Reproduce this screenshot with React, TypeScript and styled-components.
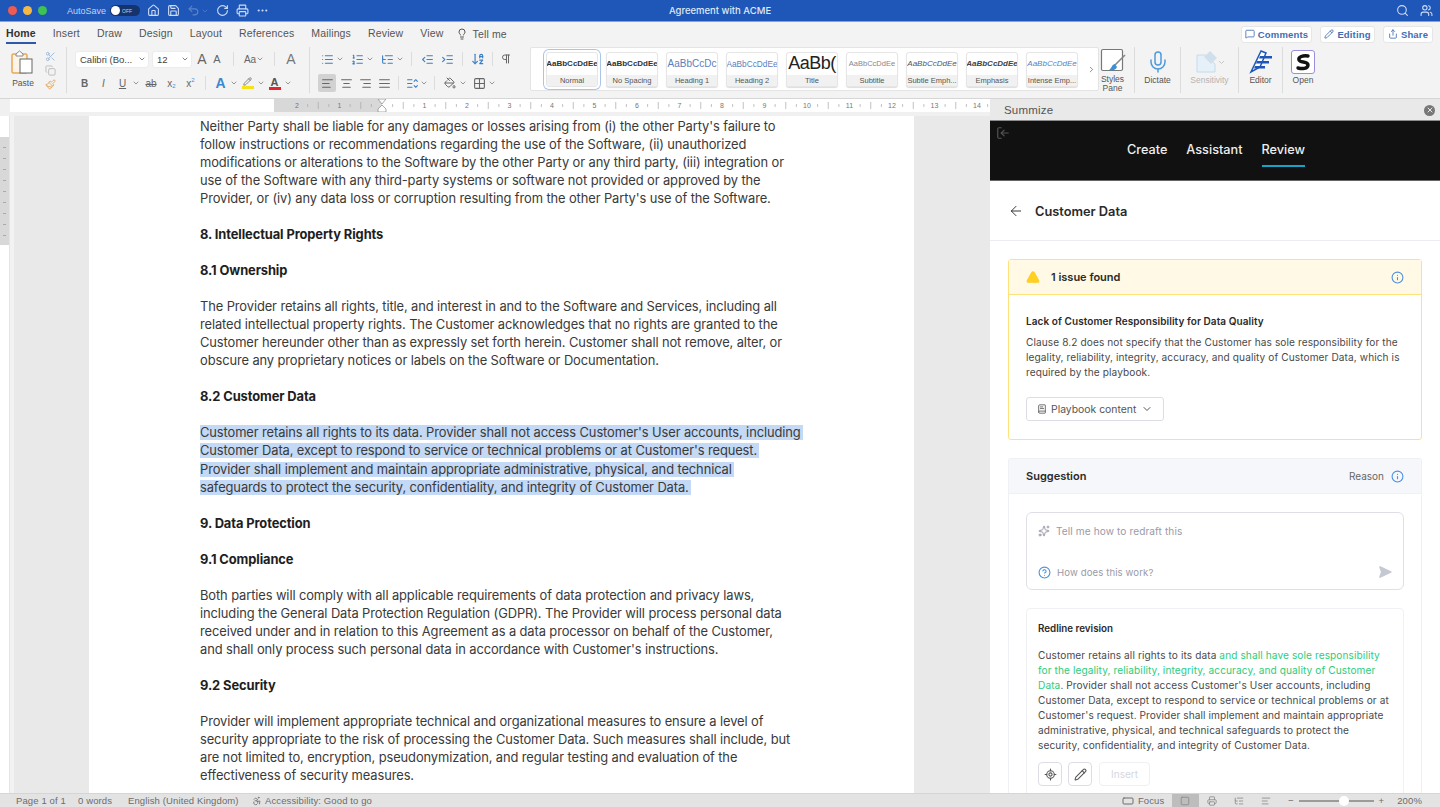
import React from "react";
import styled, { createGlobalStyle } from "styled-components";
import {
  Accessibility,
  AlignCenter,
  AlignJustify,
  AlignLeft,
  AlignRight,
  ArrowDownAZ,
  ArrowLeft,
  BookText,
  ChevronDown,
  ChevronRight,
  CircleHelp,
  Copy,
  Ellipsis,
  Grid2x2,
  House,
  IndentDecrease,
  IndentIncrease,
  Info,
  Lightbulb,
  List,
  ListChevronsUpDown,
  ListOrdered,
  ListTree,
  LocateFixed,
  LogIn,
  MessageSquare,
  Mic,
  PaintBucket,
  Paintbrush,
  Pencil,
  Pilcrow,
  Printer,
  RectangleHorizontal,
  RotateCw,
  Save,
  Scissors,
  Search,
  SendHorizontal,
  Share,
  Sparkles,
  Square,
  TriangleAlert,
  Undo2,
  Users,
  X,
} from "lucide-react";

const GlobalStyle = createGlobalStyle`
  html, body { margin: 0; height: 100%; overflow: hidden; }
  #root { height: 100%; }
  * { box-sizing: border-box; }
`;

const UI_FONT = `"Liberation Sans", Arial, sans-serif`;
const DOC_FONT = `Inter, "Noto Sans", sans-serif`;

const Shell = styled.div`
  height: 807px;
  display: flex;
  flex-direction: column;
  font-family: ${UI_FONT};
  background: #f3f3f3;
`;

/* title bar */
const TitleBar = styled.div`
  height: 21px;
  background: #1f57b8;
  display: flex;
  align-items: center;
  padding-left: 8px;
  color: #cfdcf3;
  position: relative;
  flex: none;
`;
const Dot = styled.span<{ $c: string }>`
  width: 9px;
  height: 9px;
  border-radius: 50%;
  background: ${(p) => p.$c};
  margin-right: 6px;
`;
const AutoSave = styled.span`
  font-size: 9px;
  margin-left: 14px;
  color: #c3d3ef;
`;
const Toggle = styled.span`
  width: 30px;
  height: 11px;
  margin: 0 7px 0 4px;
  border-radius: 6px;
  background: #15346c;
  display: flex;
  align-items: center;
  padding-left: 1px;
  font-size: 5px;
  color: #c3d3ef;
  gap: 2px;
  &::before {
    content: "";
    width: 9px;
    height: 9px;
    border-radius: 50%;
    background: #fff;
  }
`;
const TitleIcons = styled.div`
  display: flex;
  align-items: center;
  gap: 7px;
`;
const UndoCaret = styled(ChevronDown)`
  margin-left: -6px;
`;
const DocTitle = styled.div`
  position: absolute;
  left: 0;
  right: 0;
  text-align: center;
  font-family: ${DOC_FONT};
  font-size: 9.5px;
  font-weight: 500;
  color: #dfe8f7;
`;
const TitleRight = styled.div`
  margin-left: auto;
  display: flex;
  gap: 11px;
  padding-right: 7px;
`;

/* ribbon */
const Ribbon = styled.div`
  height: 78px;
  flex: none;
  background: #f3f3f3;
  border-top: 1px solid #7fa3de;
  border-bottom: 1px solid #d6d6d6;
  display: flex;
  flex-direction: column;
`;
const TabRow = styled.div`
  height: 24px;
  flex: none;
  display: flex;
  align-items: center;
  padding: 0 7px 0 6px;
  gap: 17px;
  font-size: 10.5px;
  letter-spacing: 0.15px;
  color: #555;
`;
const RibbonTab = styled.div<{ $active?: boolean }>`
  height: 20px;
  display: flex;
  align-items: center;
  font-weight: ${(p) => (p.$active ? 700 : 400)};
  color: ${(p) => (p.$active ? "#333" : "#555")};
  border-bottom: 2px solid ${(p) => (p.$active ? "#2d5aa8" : "transparent")};
`;
const TellMe = styled.div`
  display: flex;
  align-items: center;
  gap: 5px;
  margin-left: -5px;
`;
const ActionGroup = styled.div`
  margin-left: auto;
  display: flex;
  gap: 8px;
`;
const ActionButton = styled.div<{ $w: number }>`
  width: ${(p) => p.$w}px;
  height: 17px;
  background: #fff;
  border: 1px solid #e6e6e6;
  border-radius: 3px;
  color: #3f6db5;
  font-weight: 700;
  font-size: 9.5px;
  display: flex;
  align-items: center;
  justify-content: center;
  gap: 3px;
`;
const ToolArea = styled.div`
  flex: 1;
  display: flex;
  padding-top: 1px;
`;
const Clipboard = styled.div`
  width: 67px;
  height: 46px;
  flex: none;
  border-right: 1px solid #dcdcdc;
  display: flex;
  padding: 2px 0 0 9px;
  margin-right: 8px;
`;
const PasteCol = styled.div`
  width: 28px;
  display: flex;
  flex-direction: column;
  font-size: 8.5px;
  color: #555;
  gap: 3px;
  align-items: center;
`;
const SmallCol = styled.div`
  display: flex;
  flex-direction: column;
  gap: 3px;
  padding: 2px 0 0 8px;
`;
const ToolGroup = styled.div<{ $w: number }>`
  width: ${(p) => p.$w}px;
  height: 46px;
  padding-top: 3px;
  display: flex;
  flex-direction: column;
  gap: 6px;
  flex: none;
`;
const GroupSeparator = styled.div`
  width: 1px;
  height: 46px;
  flex: none;
  background: #dcdcdc;
  margin-right: 8px;
`;
const ToolRow = styled.div`
  height: 18px;
  display: flex;
  align-items: center;
  color: #666;
`;
const Divider = styled.div<{ $m?: number }>`
  width: 1px;
  height: 14px;
  background: #dcdcdc;
  margin: 0 ${(p) => p.$m ?? 8}px;
  flex: none;
`;
const Combo = styled.div<{ $w: number }>`
  width: ${(p) => p.$w}px;
  height: 17px;
  background: #fff;
  border-radius: 3px;
  border: 1px solid #ececec;
  font-size: 9.5px;
  color: #444;
  display: flex;
  align-items: center;
  justify-content: space-between;
  padding: 0 2px 0 4px;
  margin-right: 3px;
`;
const Tool = styled.div<{
  $w: number;
  $ml?: number;
  $active?: boolean;
  $c?: string;
  $fs?: number;
  $bold?: boolean;
  $italic?: boolean;
  $deco?: string;
}>`
  width: ${(p) => p.$w}px;
  height: 18px;
  flex: none;
  margin-left: ${(p) => p.$ml ?? 0}px;
  display: flex;
  align-items: center;
  justify-content: center;
  font-size: ${(p) => p.$fs ?? 10}px;
  font-weight: ${(p) => (p.$bold ? 700 : 400)};
  font-style: ${(p) => (p.$italic ? "italic" : "normal")};
  text-decoration: ${(p) => p.$deco ?? "none"};
  color: ${(p) => p.$c ?? "#666"};
  background: ${(p) => (p.$active ? "#d2d2d2" : "transparent")};
  border-radius: 2px;
`;
const Bar = styled.span<{ $c: string }>`
  display: flex;
  flex-direction: column;
  align-items: center;
  line-height: 10px;
  font-weight: 700;
  font-size: 11px;
  &::after {
    content: "";
    width: 12px;
    height: 3px;
    background: ${(p) => p.$c};
  }
`;
const Sub = styled.span`
  font-size: 6px;
  align-self: flex-end;
  margin-bottom: 3px;
  color: #4a90d9;
`;
const Sup = styled(Sub)`
  align-self: flex-start;
  margin: 3px 0 0;
`;
const Gallery = styled.div`
  width: 569px;
  height: 44px;
  flex: none;
  background: #fff;
  border: 1px solid #e4e4e4;
  border-radius: 2px;
  margin-left: 16px;
  display: flex;
  align-items: center;
  padding-left: 15px;
  gap: 8px;
`;
const StyleCard = styled.div<{ $selected?: boolean }>`
  width: 52px;
  height: 35px;
  flex: none;
  border-radius: 3px;
  border: 1px solid #e6e6e6;
  background: #fff;
  display: flex;
  flex-direction: column;
  overflow: hidden;
  box-shadow: ${(p) => (p.$selected ? "0 0 0 2px #fff, 0 0 0 3px #a9c6e8" : "0 1px 1px #ddd")};
`;
const StyleSample = styled.div<{ $c: string; $size: number; $italic?: boolean; $bold?: boolean; $ls?: number }>`
  flex: 1;
  display: flex;
  align-items: center;
  justify-content: center;
  white-space: nowrap;
  font-size: ${(p) => p.$size}px;
  letter-spacing: ${(p) => p.$ls ?? 0}px;
  color: ${(p) => p.$c};
  font-style: ${(p) => (p.$italic ? "italic" : "normal")};
  font-weight: ${(p) => (p.$bold ? 700 : 400)};
`;
const StyleName = styled.div`
  height: 11px;
  background: #f1f1f1;
  font-size: 7.5px;
  color: #555;
  text-align: center;
  white-space: nowrap;
  line-height: 11px;
`;
const GalleryMore = styled.div`
  margin-left: 1px;
  color: #666;
  display: flex;
`;
const LargeTool = styled.div<{ $w: number; $muted?: boolean; $sep?: boolean; $pr?: number }>`
  width: ${(p) => p.$w}px;
  height: 46px;
  flex: none;
  display: flex;
  flex-direction: column;
  align-items: center;
  padding-right: ${(p) => p.$pr ?? 0}px;
  font-size: 8.5px;
  line-height: 9px;
  color: ${(p) => (p.$muted ? "#b3b3b3" : "#555")};
  text-align: center;
  border-right: ${(p) => (p.$sep ? "1px solid #dcdcdc" : "none")};
`;
const LargeIcon = styled.div`
  height: 29px;
  display: flex;
  align-items: center;
  justify-content: center;
`;
const OpenBox = styled.div`
  width: 24px;
  height: 24px;
  border-radius: 3px;
  background: #fff;
  border: 1px solid #9a8fdc;
  display: flex;
  align-items: center;
  justify-content: center;
`;

/* workspace */
const Workspace = styled.div`
  flex: 1;
  min-height: 0;
  display: flex;
  overflow: hidden;
`;
const DocColumn = styled.div`
  width: 990px;
  display: flex;
  flex-direction: column;
  flex: none;
`;
const RulerStrip = styled.div`
  height: 17px;
  flex: none;
  background: #f0f0f0;
  padding: 0 0 4px 10px;
`;
const RulerSvg = styled.svg`
  display: block;
  background: #fff;
`;
const DocBody = styled.div`
  flex: 1;
  min-height: 0;
  display: flex;
  overflow: hidden;
`;
const SideRuler = styled.div`
  width: 10px;
  flex: none;
  background: #fff;
  border-right: 1px solid #e4e4e4;
  padding-top: 21px;
`;
const SideShade = styled.div`
  height: 108px;
  background-color: #d8d8d8;
  background-image: repeating-linear-gradient(to bottom, transparent 0 10px, #aaa 10px 11px);
  background-size: 3px 100%;
  background-position: center;
  background-repeat: no-repeat;
`;
const Canvas = styled.div`
  flex: 1;
  background: #e9e9e9;
  border-left: 4px solid #f2f2f2;
  padding-left: 75px;
  padding-right: 76px;
`;
const Page = styled.div`
  height: 100%;
  background: #fff;
  padding: 2px 0 0 111px;
  font-family: ${DOC_FONT};
  font-size: 12.9px;
  line-height: 18.03px;
  color: #3a3a3a;
  letter-spacing: -0.1px;
  overflow: hidden;
`;
const Para = styled.div`
  margin-bottom: 18.03px;
`;
const Line = styled.div`
  white-space: nowrap;
`;
const Heading = styled.div`
  font-weight: 700;
  color: #1e1e1e;
  margin-bottom: 18.03px;
`;
const Marked = styled.span`
  background: #c3d9f5;
  padding-right: 2px;
`;

/* task pane */
const Pane = styled.div`
  flex: 1;
  min-width: 0;
  display: flex;
  flex-direction: column;
  background: #fff;
  overflow: hidden;
  font-family: ${DOC_FONT};
`;
const PaneTitle = styled.div`
  height: 22px;
  flex: none;
  background: #e9e9e9;
  border-bottom: 1px solid #8c8c8c;
  display: flex;
  align-items: center;
  justify-content: space-between;
  padding: 1px 5px 0 14px;
  font-family: ${UI_FONT};
  font-size: 11.5px;
  color: #555;
  letter-spacing: 0.2px;
`;
const CloseDot = styled.span`
  width: 11px;
  height: 11px;
  border-radius: 50%;
  background: #777;
  color: #e9e9e9;
  display: flex;
  align-items: center;
  justify-content: center;
`;
const NavBar = styled.div`
  height: 60px;
  flex: none;
  background: #111;
  border-bottom: 1px solid #666;
  display: flex;
  justify-content: center;
  gap: 19px;
  position: relative;
  padding: 0 0 0 2px;
`;
const NavExit = styled.div`
  position: absolute;
  left: 6px;
  top: 5px;
  color: #555;
  display: flex;
`;
const ExitIcon = styled(LogIn)`
  transform: scaleX(-1);
`;
const NavTab = styled.div<{ $active?: boolean }>`
  height: 46px;
  padding-top: 21px;
  font-size: 12.7px;
  font-weight: 500;
  color: #eee;
  border-bottom: 2px solid ${(p) => (p.$active ? "#17a2c9" : "transparent")};
`;
const BackRow = styled.div`
  height: 60px;
  flex: none;
  border-bottom: 1px solid #ececf1;
  display: flex;
  align-items: center;
  gap: 11px;
  padding: 1px 0 0 18px;
  font-size: 12.8px;
  font-weight: 600;
  color: #2a2a2a;
`;
const PaneBody = styled.div`
  padding: 18px 18px 0;
`;
const IssueCard = styled.div`
  height: 181px;
  border: 1px solid #ffe27a;
  border-radius: 3px;
  margin-bottom: 18px;
`;
const CardHeader = styled.div<{ $tone: "warn" | "plain" }>`
  height: 35px;
  display: flex;
  align-items: center;
  padding: 0 17px;
  background: ${(p) => (p.$tone === "warn" ? "#fff9e5" : "#f6f7fa")};
  border-bottom: 1px solid ${(p) => (p.$tone === "warn" ? "#ffe27a" : "#f0f1f5")};
  font-size: 11px;
  font-weight: 600;
  color: #2a2a2a;
`;
const WarnIcon = styled(TriangleAlert)`
  margin-right: 11px;
`;
const HeaderEnd = styled.div`
  margin-left: auto;
  display: flex;
  align-items: center;
  gap: 7px;
  font-size: 10px;
  font-weight: 400;
  color: #666;
`;
const IssueBody = styled.div`
  padding: 19px 17px 0;
`;
const IssueTitle = styled.div`
  font-size: 10px;
  font-weight: 600;
  letter-spacing: 0.08px;
  color: #2a2a2a;
  margin-bottom: 6px;
  line-height: 15px;
`;
const BodyText = styled.div`
  font-size: 10.1px;
  letter-spacing: 0.1px;
  line-height: 15px;
  color: #4a4a4a;
  white-space: nowrap;
`;
const PlaybookButton = styled.div`
  margin-top: 17px;
  width: 138px;
  height: 24px;
  border: 1px solid #dddde6;
  border-radius: 3px;
  display: flex;
  align-items: center;
  padding-left: 10px;
  gap: 4px;
  font-size: 10.4px;
  color: #555;
`;
const PlaybookCaret = styled(ChevronDown)`
  margin-left: 1px;
`;
const SuggestionCard = styled.div`
  border: 1px solid #f0f1f5;
  border-radius: 3px;
  border-bottom: none;
`;
const SuggestionBody = styled.div`
  padding: 18px 17px 0;
`;
const PromptBox = styled.div`
  height: 78px;
  border: 1px solid #dfdfe8;
  border-radius: 6px;
  padding: 9px 11px 8px;
  display: flex;
  flex-direction: column;
  justify-content: space-between;
  color: #9a9aa8;
  font-size: 10.1px;
  letter-spacing: 0.1px;
  margin-bottom: 18px;
`;
const PromptRow = styled.div`
  display: flex;
  align-items: center;
  gap: 6px;
  height: 18px;
`;
const Hint = styled.span`
  font-size: 9.6px;
`;
const SendIcon = styled.span`
  margin-left: auto;
  display: flex;
  color: #c5c8d2;
`;
const RedlineCard = styled.div`
  border: 1px solid #f0f1f5;
  border-radius: 4px;
  padding: 12px 11px;
  height: 200px;
`;
const RedlineTitle = styled.div`
  font-size: 9.8px;
  font-weight: 600;
  color: #2a2a2a;
  line-height: 15px;
  margin-bottom: 12px;
`;
const Added = styled.span`
  color: #2ecc7d;
`;
const RedlineActions = styled.div`
  display: flex;
  gap: 6px;
  margin-top: 9px;
`;
const SquareButton = styled.div`
  width: 24px;
  height: 24px;
  border: 1px solid #dddde6;
  border-radius: 4px;
  display: flex;
  align-items: center;
  justify-content: center;
  color: #555;
`;
const InsertButton = styled.div`
  width: 51px;
  height: 24px;
  margin-left: 1px;
  border: 1px solid #f0f0f4;
  border-radius: 4px;
  color: #d5d7e2;
  font-size: 10px;
  display: flex;
  align-items: center;
  justify-content: center;
`;

/* status bar */
const StatusBar = styled.div`
  height: 14px;
  flex: none;
  background: #e3e3e3;
  border-top: 1px solid #d5d5d5;
  display: flex;
  align-items: center;
  font-size: 9.5px;
  color: #6c6c6c;
  padding-left: 16px;
  letter-spacing: 0.12px;
`;
const StatusItem = styled.span<{ $w: number }>`
  width: ${(p) => p.$w}px;
  white-space: nowrap;
  display: flex;
  align-items: center;
  gap: 3px;
  flex: none;
`;
const StatusRight = styled.div`
  margin-left: auto;
  display: flex;
  align-items: center;
  height: 100%;
  padding-right: 18px;
`;
const FocusLabel = styled.span`
  width: 34px;
  margin-left: 4px;
`;
const ViewTab = styled.div<{ $active?: boolean }>`
  width: 27px;
  height: 100%;
  display: flex;
  align-items: center;
  justify-content: center;
  background: ${(p) => (p.$active ? "#bdbdbd" : "transparent")};
  color: #8a8a8a;
`;
const ZoomMinus = styled.span`
  margin-left: 8px;
`;
const Slider = styled.div`
  width: 75px;
  height: 2px;
  background: #9b9b9b;
  margin: 0 5px;
  position: relative;
`;
const Thumb = styled.span`
  position: absolute;
  left: 40px;
  top: -4px;
  width: 10px;
  height: 10px;
  border-radius: 50%;
  background: #fff;
`;
const ZoomValue = styled.span`
  margin-left: 13px;
`;

const HorizontalRuler = () => {
  const zero = 372; // zero mark, measured from the left of the strip
  const step = 42.5;
  const ticks: React.ReactNode[] = [];
  for (let i = -2; i <= 14; i++) {
    const x = zero + i * step;
    if (i !== 0) {
      ticks.push(
        <text key={i} x={x} y={9} fontSize="7" fill="#777" textAnchor="middle" fontFamily="Liberation Sans">
          {Math.abs(i)}
        </text>
      );
    }
    [0.25, 0.5, 0.75].forEach((f) => {
      ticks.push(
        <line
          key={`${i}-${f}`}
          x1={x + step * f}
          x2={x + step * f}
          y1={f === 0.5 ? 3 : 5}
          y2={f === 0.5 ? 10 : 8}
          stroke="#a8a8a8"
          strokeWidth="0.7"
        />
      );
    });
  }
  return (
    <RulerSvg width="980" height="13" viewBox="0 0 980 13">
      <rect x={264} width={108} height={13} fill="#d8d8d8" />
      {ticks}
      <path d="M368 0h8l-4 5zM368 13h8v-3l-4-4-4 4z" fill="#fff" stroke="#888" strokeWidth="0.7" />
    </RulerSvg>
  );
};

const PasteIcon = () => (
  <svg width="26" height="26" viewBox="0 0 26 26" fill="none">
    <rect x="2" y="5" width="15" height="19" rx="1.5" stroke="#e8a65a" strokeWidth="1.5" fill="#fdf4e8" />
    <path d="M6 5l3.5-3L13 5v2H6z" fill="#fff" stroke="#888" />
    <rect x="10" y="10" width="12" height="14" fill="#fff" stroke="#666" />
  </svg>
);

const StylesPaneIcon = () => (
  <svg width="26" height="26" viewBox="0 0 26 26" fill="none">
    <rect x="1.5" y="1.5" width="21" height="21" rx="1.5" stroke="#777" strokeWidth="1.2" fill="#fff" />
    <path d="M25 7L15 17" stroke="#888" strokeWidth="1.6" />
    <path d="M15 16c-3 0-3 4-6 6 3 1 7 0 8-3z" fill="#3f8fd6" />
  </svg>
);

const SensitivityIcon = () => (
  <svg width="30" height="24" viewBox="0 0 30 24" fill="none">
    <path d="M2 5h9l9 9v8H2z" fill="#e6f0f8" stroke="#c4dbec" />
    <path d="M9 7l6-6 7 7-6 6z" fill="#cfdfec" />
    <path d="M24 11l2.5 2.5L29 11" stroke="#c8c8c8" />
  </svg>
);

const EditorIcon = () => (
  <svg width="24" height="24" viewBox="0 0 24 24" fill="none">
    <path d="M12 1L2 22l9-5 6-14z" stroke="#1f57b8" strokeWidth="1.5" fill="#fff" />
    <path d="M11 6h12v2.5H10zM8 11h12v2.5H7zM6 16h10v2.5H5z" fill="#1f57b8" />
  </svg>
);

const SummizeMark = () => (
  <svg width="16" height="18" viewBox="0 0 16 18" fill="none">
    <path d="M13 3C8 2 3 4 4 7c1 3 9 1 9 5s-6 4-10 3" stroke="#111" strokeWidth="3.4" strokeLinecap="round" />
  </svg>
);

const styleCards = [
  { name: "Normal", c: "#333", size: 8, bold: true, selected: true, sample: "AaBbCcDdEe" },
  { name: "No Spacing", c: "#333", size: 8, bold: true, sample: "AaBbCcDdEe" },
  { name: "Heading 1", c: "#5c80bd", size: 10, sample: "AaBbCcDc" },
  { name: "Heading 2", c: "#5c80bd", size: 8.3, sample: "AaBbCcDdEe" },
  { name: "Title", c: "#222", size: 18, ls: -0.5, sample: "AaBb(" },
  { name: "Subtitle", c: "#888", size: 7.5, sample: "AaBbCcDdEe" },
  { name: "Subtle Emph...", c: "#555", size: 8, italic: true, sample: "AaBbCcDdEe" },
  { name: "Emphasis", c: "#444", size: 8, italic: true, bold: true, sample: "AaBbCcDdEe" },
  { name: "Intense Emp...", c: "#5c80bd", size: 8, italic: true, sample: "AaBbCcDdEe" },
];

export default function App() {
  return (
    <>
      <GlobalStyle />
      <Shell>
        <TitleBar>
          <Dot $c="#ee5b52" />
          <Dot $c="#f4b942" />
          <Dot $c="#3fc254" />
          <AutoSave>AutoSave</AutoSave>
          <Toggle>OFF</Toggle>
          <TitleIcons>
            <House size={13} />
            <Save size={13} />
            <Undo2 size={13} color="#5f84c9" />
            <UndoCaret size={8} color="#5f84c9" />
            <RotateCw size={13} />
            <Printer size={13} />
            <Ellipsis size={13} />
          </TitleIcons>
          <DocTitle>Agreement with ACME</DocTitle>
          <TitleRight>
            <Search size={13} />
            <Users size={13} />
          </TitleRight>
        </TitleBar>

        <Ribbon>
          <TabRow>
            <RibbonTab $active>Home</RibbonTab>
            <RibbonTab>Insert</RibbonTab>
            <RibbonTab>Draw</RibbonTab>
            <RibbonTab>Design</RibbonTab>
            <RibbonTab>Layout</RibbonTab>
            <RibbonTab>References</RibbonTab>
            <RibbonTab>Mailings</RibbonTab>
            <RibbonTab>Review</RibbonTab>
            <RibbonTab>View</RibbonTab>
            <TellMe>
              <Lightbulb size={12} />
              Tell me
            </TellMe>
            <ActionGroup>
              <ActionButton $w={71}>
                <MessageSquare size={10} />
                Comments
              </ActionButton>
              <ActionButton $w={55}>
                <Pencil size={10} />
                Editing
              </ActionButton>
              <ActionButton $w={50}>
                <Share size={10} />
                Share
              </ActionButton>
            </ActionGroup>
          </TabRow>
          <ToolArea>
            <Clipboard>
              <PasteCol>
                <PasteIcon />
                Paste
              </PasteCol>
              <SmallCol>
                <Scissors size={11} color="#9db9d8" />
                <Copy size={11} color="#bbb" />
                <Paintbrush size={11} color="#e8a65a" />
              </SmallCol>
            </Clipboard>
            <ToolGroup $w={234}>
              <ToolRow>
                <Combo $w={74}>
                  Calibri (Bo...
                  <ChevronDown size={8} />
                </Combo>
                <Combo $w={40}>
                  12
                  <ChevronDown size={8} />
                </Combo>
                <Tool $w={14} $fs={14}>A</Tool>
                <Tool $w={16} $fs={11}>A</Tool>
                <Divider />
                <Tool $w={24}>
                  Aa
                  <ChevronDown size={8} />
                </Tool>
                <Divider />
                <Tool $w={16} $c="#777" $fs={14}>A</Tool>
              </ToolRow>
              <ToolRow>
                <Tool $w={19} $bold>B</Tool>
                <Tool $w={19} $italic>I</Tool>
                <Tool $w={19} $deco="underline">U</Tool>
                <ChevronDown size={8} />
                <Tool $w={22} $deco="line-through">ab</Tool>
                <Tool $w={19}>x<Sub>2</Sub></Tool>
                <Tool $w={19}>x<Sup>2</Sup></Tool>
                <Divider $m={5} />
                <Tool $w={19} $c="#3c87cf" $fs={14} $bold>A</Tool>
                <ChevronDown size={8} />
                <Tool $w={19}><Bar $c="#f5e21b"><Pencil size={9} /></Bar></Tool>
                <ChevronDown size={8} />
                <Tool $w={19} $c="#555"><Bar $c="#e3262e">A</Bar></Tool>
                <ChevronDown size={8} />
              </ToolRow>
            </ToolGroup>
            <GroupSeparator />
            <ToolGroup $w={196}>
              <ToolRow>
                <Tool $w={18} $c="#3b7fc4"><List size={13} /></Tool>
                <ChevronDown size={8} />
                <Tool $w={18} $ml={4} $c="#3b7fc4"><ListOrdered size={13} /></Tool>
                <ChevronDown size={8} />
                <Tool $w={18} $ml={4} $c="#3b7fc4"><ListTree size={13} /></Tool>
                <ChevronDown size={8} />
                <Divider $m={7} />
                <Tool $w={17} $c="#3b7fc4"><IndentDecrease size={13} /></Tool>
                <Tool $w={17} $ml={3} $c="#3b7fc4"><IndentIncrease size={13} /></Tool>
                <Divider $m={6} />
                <Tool $w={17} $c="#3b7fc4"><ArrowDownAZ size={14} /></Tool>
                <Divider $m={6} />
                <Tool $w={14}><Pilcrow size={12} /></Tool>
              </ToolRow>
              <ToolRow>
                <Tool $w={18} $active><AlignLeft size={13} /></Tool>
                <Tool $w={18} $ml={1}><AlignCenter size={13} /></Tool>
                <Tool $w={18} $ml={1}><AlignRight size={13} /></Tool>
                <Tool $w={18} $ml={1}><AlignJustify size={13} /></Tool>
                <Divider $m={5} />
                <Tool $w={16} $c="#3b7fc4"><ListChevronsUpDown size={13} /></Tool>
                <ChevronDown size={8} />
                <Divider $m={6} />
                <Tool $w={18}><PaintBucket size={12} /></Tool>
                <ChevronDown size={8} />
                <Tool $w={18} $ml={3}><Grid2x2 size={13} /></Tool>
                <ChevronDown size={8} />
              </ToolRow>
            </ToolGroup>
            <Gallery>
              {styleCards.map((s) => (
                <StyleCard key={s.name} $selected={s.selected}>
                  <StyleSample $c={s.c} $size={s.size} $italic={s.italic} $bold={s.bold} $ls={s.ls}>
                    {s.sample}
                  </StyleSample>
                  <StyleName>{s.name}</StyleName>
                </StyleCard>
              ))}
              <GalleryMore>
                <ChevronRight size={9} />
              </GalleryMore>
            </Gallery>
            <LargeTool $w={36} $pr={8} $sep>
              <LargeIcon><StylesPaneIcon /></LargeIcon>
              Styles
              <br />
              Pane
            </LargeTool>
            <LargeTool $w={46} $sep>
              <LargeIcon><Mic size={24} color="#4f9bdc" strokeWidth={1.5} /></LargeIcon>
              Dictate
            </LargeTool>
            <LargeTool $w={58} $muted $sep>
              <LargeIcon><SensitivityIcon /></LargeIcon>
              Sensitivity
            </LargeTool>
            <LargeTool $w={44} $sep>
              <LargeIcon><EditorIcon /></LargeIcon>
              Editor
            </LargeTool>
            <LargeTool $w={40}>
              <LargeIcon><OpenBox><SummizeMark /></OpenBox></LargeIcon>
              Open
            </LargeTool>
          </ToolArea>
        </Ribbon>

        <Workspace>
          <DocColumn>
            <RulerStrip>
              <HorizontalRuler />
            </RulerStrip>
            <DocBody>
              <SideRuler>
                <SideShade />
              </SideRuler>
              <Canvas>
                <Page>
                  <Para>
                    <Line>Neither Party shall be liable for any damages or losses arising from (i) the other Party's failure to</Line>
                    <Line>follow instructions or recommendations regarding the use of the Software, (ii) unauthorized</Line>
                    <Line>modifications or alterations to the Software by the other Party or any third party, (iii) integration or</Line>
                    <Line>use of the Software with any third-party systems or software not provided or approved by the</Line>
                    <Line>Provider, or (iv) any data loss or corruption resulting from the other Party's use of the Software.</Line>
                  </Para>
                  <Heading>8. Intellectual Property Rights</Heading>
                  <Heading>8.1 Ownership</Heading>
                  <Para>
                    <Line>The Provider retains all rights, title, and interest in and to the Software and Services, including all</Line>
                    <Line>related intellectual property rights. The Customer acknowledges that no rights are granted to the</Line>
                    <Line>Customer hereunder other than as expressly set forth herein. Customer shall not remove, alter, or</Line>
                    <Line>obscure any proprietary notices or labels on the Software or Documentation.</Line>
                  </Para>
                  <Heading>8.2 Customer Data</Heading>
                  <Para>
                    <Line><Marked>Customer retains all rights to its data. Provider shall not access Customer's User accounts, including</Marked></Line>
                    <Line><Marked>Customer Data, except to respond to service or technical problems or at Customer's request.</Marked></Line>
                    <Line><Marked>Provider shall implement and maintain appropriate administrative, physical, and technical</Marked></Line>
                    <Line><Marked>safeguards to protect the security, confidentiality, and integrity of Customer Data.</Marked></Line>
                  </Para>
                  <Heading>9. Data Protection</Heading>
                  <Heading>9.1 Compliance</Heading>
                  <Para>
                    <Line>Both parties will comply with all applicable requirements of data protection and privacy laws,</Line>
                    <Line>including the General Data Protection Regulation (GDPR). The Provider will process personal data</Line>
                    <Line>received under and in relation to this Agreement as a data processor on behalf of the Customer,</Line>
                    <Line>and shall only process such personal data in accordance with Customer's instructions.</Line>
                  </Para>
                  <Heading>9.2 Security</Heading>
                  <Para>
                    <Line>Provider will implement appropriate technical and organizational measures to ensure a level of</Line>
                    <Line>security appropriate to the risk of processing the Customer Data. Such measures shall include, but</Line>
                    <Line>are not limited to, encryption, pseudonymization, and regular testing and evaluation of the</Line>
                    <Line>effectiveness of security measures.</Line>
                  </Para>
                </Page>
              </Canvas>
            </DocBody>
          </DocColumn>

          <Pane>
            <PaneTitle>
              Summize
              <CloseDot>
                <X size={8} strokeWidth={3} />
              </CloseDot>
            </PaneTitle>
            <NavBar>
              <NavExit>
                <ExitIcon size={14} />
              </NavExit>
              <NavTab>Create</NavTab>
              <NavTab>Assistant</NavTab>
              <NavTab $active>Review</NavTab>
            </NavBar>
            <BackRow>
              <ArrowLeft size={16} strokeWidth={1.4} />
              Customer Data
            </BackRow>
            <PaneBody>
              <IssueCard>
                <CardHeader $tone="warn">
                  <WarnIcon size={14} fill="#ffcf24" color="#ffcf24" />
                  1 issue found
                  <HeaderEnd>
                    <Info size={13} color="#4a90e2" />
                  </HeaderEnd>
                </CardHeader>
                <IssueBody>
                  <IssueTitle>Lack of Customer Responsibility for Data Quality</IssueTitle>
                  <BodyText>
                    Clause 8.2 does not specify that the Customer has sole responsibility for the
                    <br />
                    legality, reliability, integrity, accuracy, and quality of Customer Data, which is
                    <br />
                    required by the playbook.
                  </BodyText>
                  <PlaybookButton>
                    <BookText size={10} />
                    Playbook content
                    <PlaybookCaret size={12} />
                  </PlaybookButton>
                </IssueBody>
              </IssueCard>
              <SuggestionCard>
                <CardHeader $tone="plain">
                  Suggestion
                  <HeaderEnd>
                    Reason
                    <Info size={13} color="#4a90e2" />
                  </HeaderEnd>
                </CardHeader>
                <SuggestionBody>
                  <PromptBox>
                    <PromptRow>
                      <Sparkles size={12} />
                      Tell me how to redraft this
                    </PromptRow>
                    <PromptRow>
                      <CircleHelp size={13} color="#4a90e2" />
                      <Hint>How does this work?</Hint>
                      <SendIcon>
                        <SendHorizontal size={14} fill="#c5c8d2" />
                      </SendIcon>
                    </PromptRow>
                  </PromptBox>
                  <RedlineCard>
                    <RedlineTitle>Redline revision</RedlineTitle>
                    <BodyText>
                      Customer retains all rights to its data <Added>and shall have sole responsibility</Added>
                      <br />
                      <Added>for the legality, reliability, integrity, accuracy, and quality of Customer</Added>
                      <br />
                      <Added>Data</Added>. Provider shall not access Customer's User accounts, including
                      <br />
                      Customer Data, except to respond to service or technical problems or at
                      <br />
                      Customer's request. Provider shall implement and maintain appropriate
                      <br />
                      administrative, physical, and technical safeguards to protect the
                      <br />
                      security, confidentiality, and integrity of Customer Data.
                    </BodyText>
                    <RedlineActions>
                      <SquareButton><LocateFixed size={13} /></SquareButton>
                      <SquareButton><Pencil size={13} /></SquareButton>
                      <InsertButton>Insert</InsertButton>
                    </RedlineActions>
                  </RedlineCard>
                </SuggestionBody>
              </SuggestionCard>
            </PaneBody>
          </Pane>
        </Workspace>

        <StatusBar>
          <StatusItem $w={62}>Page 1 of 1</StatusItem>
          <StatusItem $w={50}>0 words</StatusItem>
          <StatusItem $w={124}>English (United Kingdom)</StatusItem>
          <StatusItem $w={150}>
            <Accessibility size={10} />
            Accessibility: Good to go
          </StatusItem>
          <StatusRight>
            <RectangleHorizontal size={12} />
            <FocusLabel>Focus</FocusLabel>
            <ViewTab $active><Square size={10} /></ViewTab>
            <ViewTab><Printer size={10} /></ViewTab>
            <ViewTab><ListTree size={10} /></ViewTab>
            <ViewTab><AlignLeft size={10} /></ViewTab>
            <ZoomMinus>−</ZoomMinus>
            <Slider><Thumb /></Slider>
            <span>+</span>
            <ZoomValue>200%</ZoomValue>
          </StatusRight>
        </StatusBar>
      </Shell>
    </>
  );
}
